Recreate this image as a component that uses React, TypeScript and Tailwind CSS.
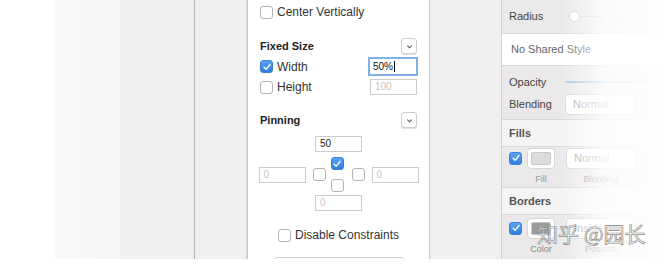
import React from "react";

const font = { fontFamily: '"Liberation Sans", Arial, sans-serif' };

function Check({ checked = false }: { checked?: boolean }) {
	if (checked) {
		return (
			<span className="flex h-[13px] w-[13px] shrink-0 items-center justify-center rounded-[3px] border border-[#3a7fd6] bg-[linear-gradient(to_bottom,#5aa3f0,#2f7ee0)]">
				<svg viewBox="0 0 12 12" className="h-[10px] w-[10px]">
					<path
						d="M2.5 6.3 L5 8.8 L9.6 3"
						fill="none"
						stroke="white"
						strokeWidth="1.6"
						strokeLinecap="round"
						strokeLinejoin="round"
					/>
				</svg>
			</span>
		);
	}
	return (
		<span className="block h-[13px] w-[13px] shrink-0 rounded-[3px] border border-[#b4b4b4] bg-white" />
	);
}

function Chevron() {
	return (
		<span className="flex h-[16px] w-[16px] items-center justify-center rounded-[3px] border border-[#cdcdcd] bg-white shadow-[0_1px_0_#e0e0e0]">
			<svg viewBox="0 0 8 8" className="h-[7px] w-[7px]">
				<path
					d="M1.5 3 L4 5.5 L6.5 3"
					fill="none"
					stroke="#555"
					strokeWidth="1.2"
				/>
			</svg>
		</span>
	);
}

function Field({
	value,
	muted = false,
	className = "",
}: {
	value: string;
	muted?: boolean;
	className?: string;
}) {
	return (
		<span
			className={`flex h-[16px] w-[47px] shrink-0 items-center border border-[#cccccc] bg-white px-[4px] text-[10px] ${
				muted ? "text-[#c4c4c4]" : "text-[#222]"
			} ${className}`}
		>
			{value}
		</span>
	);
}

function ConstraintsPanel() {
	return (
		<div className="flex w-[183px] shrink-0 flex-col border-x border-x-[#c6c6c6] bg-white pl-[12px] pr-[12px] text-[12px] leading-[14px] text-[#333] shadow-[-1px_0_0_#dcdcdc]">
			<div className="mt-[5px] flex items-center gap-[4px]">
				<Check />
				<span>Center Vertically</span>
			</div>

			<div className="mt-[19px] flex h-[16px] items-center justify-between">
				<span className="text-[11px] font-bold text-[#222]">Fixed Size</span>
				<Chevron />
			</div>
			<div className="mt-[3px] flex h-[19px] items-center justify-between">
				<div className="flex items-center gap-[4px]">
					<Check checked />
					<span>Width</span>
				</div>
				<span className="mr-[-1px] flex h-[19px] w-[50px] items-center border-2 border-[#7fb1e6] bg-white px-[3px] text-[10px] text-[#111]">
					50%
					<span className="ml-[1px] h-[11px] w-px bg-[#111]" />
				</span>
			</div>
			<div className="mt-[3px] flex h-[16px] items-center justify-between">
				<div className="flex items-center gap-[4px]">
					<Check />
					<span>Height</span>
				</div>
				<Field value="100" muted />
			</div>

			<div className="mt-[17px] flex h-[16px] items-center justify-between">
				<span className="text-[11px] font-bold text-[#222]">Pinning</span>
				<Chevron />
			</div>

			<div className="mt-[8px] flex flex-col items-center">
				<Field value="50" />
				<div className="mt-[5px] flex items-center">
					<Field value="0" muted />
					<span className="ml-[7px]">
						<Check />
					</span>
					<div className="ml-[5px] flex flex-col">
						<Check checked />
						<span className="mt-[9px]">
							<Check />
						</span>
					</div>
					<span className="ml-[8px]">
						<Check />
					</span>
					<Field value="0" muted className="ml-[7px]" />
				</div>
				<Field value="0" muted className="mt-[3px]" />
			</div>

			<div className="mt-[17px] flex items-center justify-center gap-[4px]">
				<Check />
				<span>Disable Constraints</span>
			</div>

			<div className="mx-auto mt-[15px] h-[20px] w-[132px] shrink-0 rounded-[4px] border border-[#cfcfcf] bg-white" />
		</div>
	);
}

function Swatch({ tone }: { tone: string }) {
	return (
		<span className="flex h-[21px] w-[28px] items-center justify-center rounded-[4px] border border-[#d6d6d6] bg-white">
			<span className={`h-[13px] w-[20px] rounded-[2px] border border-[#c8c8c8] ${tone}`} />
		</span>
	);
}

function Select({ label }: { label: string }) {
	return (
		<span className="flex h-[21px] w-[70px] items-center rounded-[4px] border border-[#d6d6d6] bg-white px-[7px] text-[11px] text-[#a8a8a8]">
			{label}
		</span>
	);
}

function Inspector() {
	const rowBg = "bg-[#ebe8e9]";
	return (
		<div className="relative flex min-w-0 flex-1 flex-col border-l border-l-[#cfcfcf] text-[11px] text-[#444]">
			<div className={`flex h-[34px] items-center border-b border-b-[#d8d8d8] pl-[7px] ${rowBg}`}>
				<span className="w-[60px]">Radius</span>
				<span className="h-[11px] w-[11px] rounded-full border border-[#cfcfcf] bg-white" />
				<span className="h-px w-[60px] bg-[#d6d6d6]" />
			</div>
			<div className="flex h-[32px] items-center border-b border-b-[#d8d8d8] bg-white pl-[9px] text-[#666]">
				No Shared Style
			</div>
			<div className={`flex h-[54px] flex-col gap-[5px] border-b border-b-[#d8d8d8] pl-[7px] pt-[9px] ${rowBg}`}>
				<div className="flex h-[14px] items-center">
					<span className="w-[56px]">Opacity</span>
					<span className="h-[2px] w-[90px] rounded bg-[#a9c8ea]" />
				</div>
				<div className="flex items-center">
					<span className="w-[56px]">Blending</span>
					<Select label="Normal" />
				</div>
			</div>
			<div className="flex h-[27px] items-center border-b border-b-[#dadada] bg-[#f5f4f4] pl-[7px] font-bold text-[#555]">
				Fills
			</div>
			<div className={`flex h-[41px] flex-col justify-center border-b border-b-[#d8d8d8] pl-[7px] ${rowBg}`}>
				<div className="flex items-center">
					<Check checked />
					<span className="ml-[5px]">
						<Swatch tone="bg-[#dcdcdc]" />
					</span>
					<span className="ml-[11px]">
						<Select label="Normal" />
					</span>
				</div>
				<div className="mt-[4px] flex text-[9px] text-[#999]">
					<span className="ml-[18px] w-[28px] text-center">Fill</span>
					<span className="ml-[11px] w-[70px] text-center">Blending</span>
				</div>
			</div>
			<div className="flex h-[27px] items-center border-b border-b-[#dadada] bg-[#f5f4f4] pl-[7px] font-bold text-[#555]">
				Borders
			</div>
			<div className={`flex flex-1 flex-col justify-center pl-[7px] ${rowBg}`}>
				<div className="flex items-center">
					<Check checked />
					<span className="ml-[5px]">
						<Swatch tone="bg-[#9b9b9b]" />
					</span>
					<span className="ml-[11px]">
						<Select label="Inside" />
					</span>
				</div>
				<div className="mt-[4px] flex text-[9px] text-[#888]">
					<span className="ml-[18px] w-[28px] text-center">Color</span>
					<span className="ml-[11px] w-[70px] text-center">Position</span>
				</div>
			</div>

			{/* fade to white on the right edge */}
			<div className="pointer-events-none absolute inset-y-0 right-0 w-[100px] bg-[linear-gradient(to_right,rgba(255,255,255,0)_0%,rgba(255,255,255,0.8)_45%,rgba(255,255,255,0.96)_100%)]" />

			{/* watermark */}
			<span
				className="pointer-events-none absolute left-[35px] top-[223px] whitespace-nowrap text-[21px] leading-none text-white/60 [-webkit-text-stroke:0.7px_#8c8c8c]"
				style={{ fontFamily: '"Noto Sans CJK SC", "Liberation Sans", sans-serif' }}
			>
				知乎 @园长
			</span>
		</div>
	);
}

export default function App() {
	return (
		<div className="h-[264px] w-[659px] overflow-hidden bg-white" style={font}>
			<div className="flex h-[259px] overflow-hidden">
				<div className="w-[55px] shrink-0 bg-white" />
				<div className="w-[65px] shrink-0 bg-[linear-gradient(to_right,#f9f9fc,#f6f6f6_60%,#f5f7f2)]" />
				<div className="w-[74px] shrink-0 bg-[#efefef]" />
				<div className="w-px shrink-0 bg-[#b4b4b4]" />
				<div className="w-[52px] shrink-0 bg-[#efefef]" />
				<ConstraintsPanel />
				<div className="w-[71px] shrink-0 bg-[#efefef]" />
				<Inspector />
			</div>
		</div>
	);
}
